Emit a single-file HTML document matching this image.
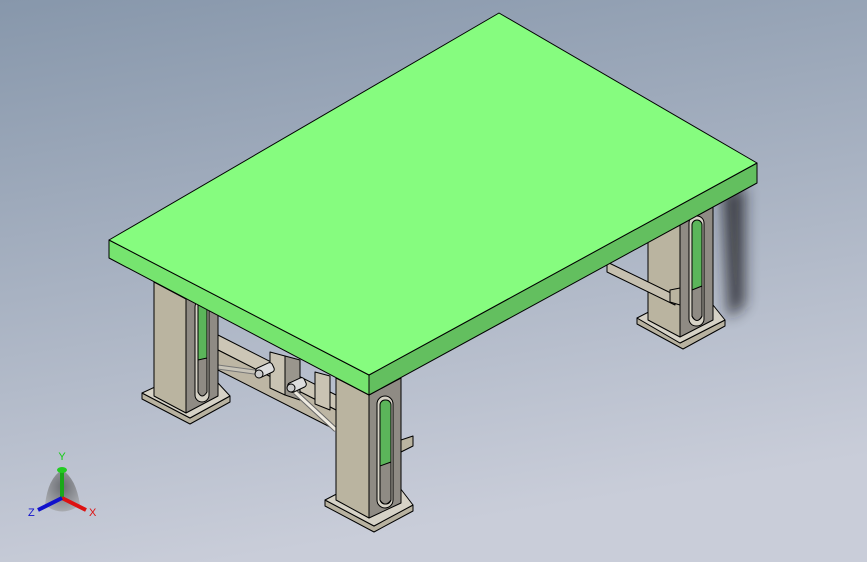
<!DOCTYPE html>
<html><head><meta charset="utf-8"><style>
html,body{margin:0;padding:0;width:867px;height:562px;overflow:hidden}
svg{display:block}
</style></head><body>
<svg width="867" height="562" viewBox="0 0 867 562" xmlns="http://www.w3.org/2000/svg" stroke-linejoin="round">
<defs>
<linearGradient id="bg" x1="0" y1="0" x2="0.25" y2="1">
<stop offset="0" stop-color="#8797ab"/><stop offset="1" stop-color="#c9cdd9"/>
</linearGradient>
<filter id="bl" x="-100%" y="-50%" width="300%" height="200%"><feGaussianBlur stdDeviation="7"/></filter>
<radialGradient id="tri" cx="0.5" cy="0.4" r="0.6"><stop offset="0" stop-color="#333"/><stop offset="1" stop-color="#999"/></radialGradient>
</defs>
<rect width="867" height="562" fill="url(#bg)"/>
<!-- shadow -->
<path d="M722 192 L745 186 L745 305 L728 318 Z" fill="#1c1c24" filter="url(#bl)" opacity="0.75"/>

<g stroke="#000" stroke-width="1">
<!-- back right leg -->
<path d="M637 318 L680 343 L725 320 L725 326 L683 349 L637 324 Z" fill="#b8b2a0"/>
<path d="M637 318 L668 302 L713 305 L725 320 L680 343 Z" fill="#d6d2c6"/>
<path d="M648 242 L680 225 L680 337 L648 320 Z" fill="#bab4a0"/>
<path d="M680 225 L713 207 L713 320 L680 337 Z" fill="#8f8b84"/>
<rect x="689" y="216" width="15" height="110" rx="7" fill="#d6d2c6"/>
<rect x="692" y="220" width="10" height="100" rx="5" fill="#5bb55a"/>
<path d="M692 290 L702 286 L702 316 Q697 325 692 316 Z" fill="#8f8b84"/>
<path d="M607 262 L675 295 L675 305 L607 272 Z" fill="#c6c0b0"/>
<path d="M670 290 L680 288 L680 305 L670 302 Z" fill="#bab4a0"/>

<!-- left beam -->
<path d="M218 335 L336 395 L336 410 L218 350 Z" fill="#ccc6b6"/>
<path d="M218 350 L336 410 L336 430 L218 370 Z" fill="#bdb6a4"/>
<!-- bracket blocks -->
<path d="M270 352 L285 356 L285 395 L270 388 Z" fill="#c9c3b3"/>
<path d="M285 356 L300 360 L300 400 L285 395 Z" fill="#9a968d"/>
<path d="M315 372 L330 376 L330 410 L315 404 Z" fill="#c9c3b3"/>
<!-- rods -->
<path d="M203 365 L262 373" stroke="#777" stroke-width="5" fill="none"/>
<path d="M203 365 L262 373" stroke="#c8c4b8" stroke-width="3" fill="none"/>
<path d="M295 392 L336 430" stroke="#666" stroke-width="5" fill="none"/>
<path d="M295 392 L336 430" stroke="#eeeae0" stroke-width="3" fill="none"/>
<rect x="256" y="365" width="18" height="10" rx="3" fill="#ddd" transform="rotate(-25 265 370)"/>
<rect x="288" y="380" width="18" height="10" rx="3" fill="#ddd" transform="rotate(-25 297 385)"/>
<circle cx="259" cy="374" r="4" fill="#ccc"/>
<circle cx="291" cy="388" r="4" fill="#ccc"/>

<!-- left leg -->
<path d="M142 393 L190 418 L230 396 L230 402 L190 424 L142 399 Z" fill="#b8b2a0"/>
<path d="M142 393 L170 380 L218 383 L230 396 L190 418 Z" fill="#d6d2c6"/>
<path d="M154 282 L186 299 L186 413 L154 396 Z" fill="#bab4a0"/>
<path d="M186 299 L218 282 L218 396 L186 413 Z" fill="#8f8b84"/>
<rect x="195" y="300" width="14" height="102" rx="7" fill="#d6d2c6"/>
<rect x="198" y="300" width="9" height="92" rx="4" fill="#5bb55a"/>
<path d="M198 360 L207 358 L207 392 Q202 400 198 392 Z" fill="#8f8b84"/>

<!-- front right leg -->
<path d="M401 440 L413 436 L413 446 L401 452 Z" fill="#bab4a0"/>
<path d="M325 500 L374 526 L413 505 L413 511 L374 532 L325 506 Z" fill="#b8b2a0"/>
<path d="M325 500 L352 486 L400 488 L413 505 L374 526 Z" fill="#d6d2c6"/>
<path d="M336 378 L369 395 L369 518 L336 500 Z" fill="#bab4a0"/>
<path d="M369 395 L401 378 L401 503 L369 518 Z" fill="#8f8b84"/>
<rect x="377" y="396" width="16" height="112" rx="8" fill="#d6d2c6"/>
<rect x="380" y="400" width="11" height="104" rx="5" fill="#5bb55a"/>
<path d="M380 466 L391 462 L391 500 Q385 508 380 500 Z" fill="#8f8b84"/>

<!-- table top -->
<path d="M109 240 L369 375 L369 395 L109 258 Z" fill="#76e46f"/>
<path d="M369 375 L757 163 L757 183 L369 395 Z" fill="#63bf5f"/>
<path d="M109 240 L499 13 L757 163 L369 375 Z" fill="#86fc7f"/>
</g>

<!-- triad -->
<path d="M45 505 Q48 478 62 470 Q76 478 80 505 Q62 518 45 505 Z" fill="url(#tri)" opacity="0.6"/>
<line x1="62" y1="498" x2="62" y2="472" stroke="#1aa81a" stroke-width="4"/>
<ellipse cx="62" cy="470" rx="5" ry="3" fill="#2c2"/>
<line x1="62" y1="498" x2="86" y2="510" stroke="#d11" stroke-width="4"/>
<line x1="62" y1="498" x2="38" y2="510" stroke="#11c" stroke-width="4"/>
<text x="62" y="460" font-family="Liberation Sans,sans-serif" font-size="11" fill="#1c1" text-anchor="middle">Y</text>
<text x="89" y="516" font-family="Liberation Sans,sans-serif" font-size="11" fill="#d11">X</text>
<text x="28" y="516" font-family="Liberation Sans,sans-serif" font-size="11" fill="#11c">Z</text>
</svg>
</body></html>
